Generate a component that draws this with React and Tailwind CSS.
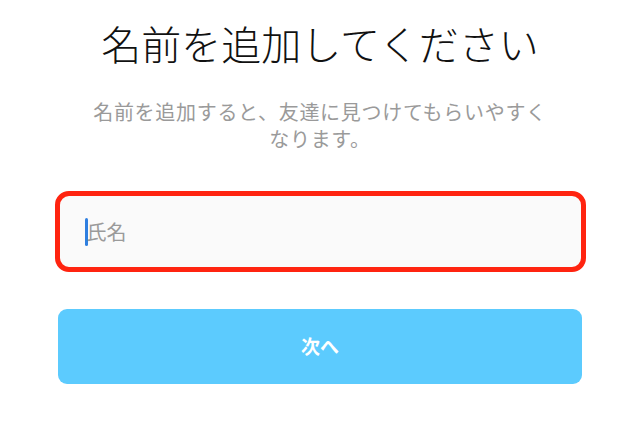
import React from "react";

const font = { fontFamily: '"Noto Sans CJK JP", "Noto Sans", sans-serif' };

export default function App() {
  return (
    <div className="w-[640px] h-[431px] bg-white flex flex-col items-center overflow-hidden" style={font}>
      <h1 className="mt-[15px] text-[40px] leading-[56px] font-light text-[#111]">名前を追加してください</h1>
      <p className="mt-[27px] w-[464px] text-center text-[20px] leading-[27px] tracking-[0.7px] text-[#9a9a9a]">
        名前を追加すると、友達に見つけてもらいやすくなります。
      </p>
      <div className="mt-[39px] w-[531px] h-[81px] border-[5px] border-[#ff2410] rounded-[14px] bg-[#fafafa] flex items-center pl-[25px]">
        <span className="w-[3px] h-[28px] bg-[#2f7fe0] rounded-sm" />
        <span className="text-[20px] text-[#9a9a9a] -ml-[1px]">氏名</span>
      </div>
      <button className="mt-[37px] w-[524px] h-[75px] rounded-[9px] bg-[#5ccbfe] text-white text-[19px] font-bold">
        次へ
      </button>
    </div>
  );
}
